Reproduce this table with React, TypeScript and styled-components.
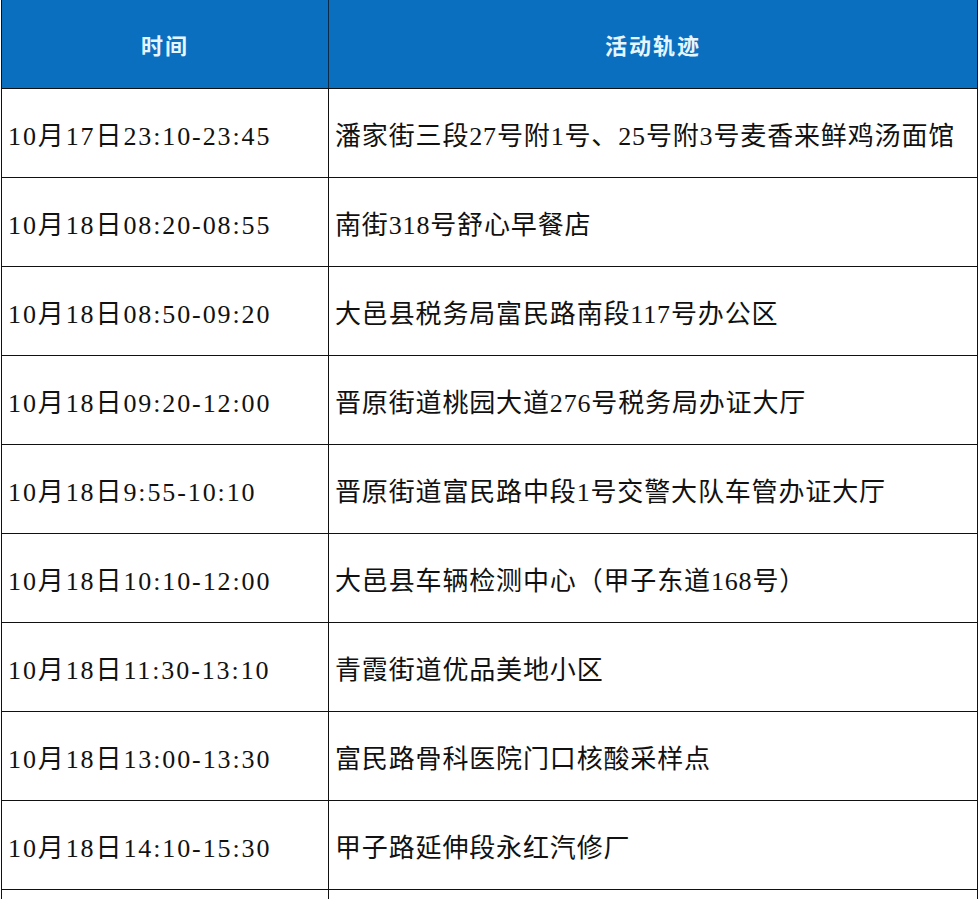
import React from "react";
import styled, { createGlobalStyle } from "styled-components";

const Global = createGlobalStyle`
  html, body { margin: 0; padding: 0; background: #ffffff; }
  body { overflow: hidden; }
`;

const Table = styled.div`
  margin-left: 1px;
  width: 977px;
  box-sizing: border-box;
  border-left: 1px solid #111;
  border-right: 1px solid #111;
`;

const Row = styled.div<{ $head?: boolean }>`
  display: grid;
  grid-template-columns: 327px 1fr;
  height: 89px;
  box-sizing: border-box;
  border-bottom: 1px solid #111;
  background: ${(p) => (p.$head ? "#0a6fbf" : "#ffffff")};
`;

const HeadCell = styled.div<{ $first?: boolean }>`
  display: flex;
  align-items: center;
  justify-content: center;
  box-sizing: border-box;
  border-right: ${(p) => (p.$first ? "1px solid #0b2a4a" : "none")};
  color: #e6f6ff;
  font-family: "Noto Sans CJK SC", sans-serif;
  font-weight: 700;
  font-size: 22px;
  letter-spacing: 2px;
  padding-bottom: 1px;
`;

const Cell = styled.div<{ $first?: boolean }>`
  display: flex;
  align-items: center;
  box-sizing: border-box;
  border-right: ${(p) => (p.$first ? "1px solid #111" : "none")};
  padding-left: 6px;
  padding-top: 1px;
  color: #111;
  font-family: "Liberation Serif", "Noto Sans CJK SC", serif;
  font-size: 26px;
  letter-spacing: ${(p) => (p.$first ? "1.9px" : "0.85px")};
  white-space: nowrap;
`;

const rows: [string, string][] = [
  ["10月17日23:10-23:45", "潘家街三段27号附1号、25号附3号麦香来鲜鸡汤面馆"],
  ["10月18日08:20-08:55", "南街318号舒心早餐店"],
  ["10月18日08:50-09:20", "大邑县税务局富民路南段117号办公区"],
  ["10月18日09:20-12:00", "晋原街道桃园大道276号税务局办证大厅"],
  ["10月18日9:55-10:10", "晋原街道富民路中段1号交警大队车管办证大厅"],
  ["10月18日10:10-12:00", "大邑县车辆检测中心（甲子东道168号）"],
  ["10月18日11:30-13:10", "青霞街道优品美地小区"],
  ["10月18日13:00-13:30", "富民路骨科医院门口核酸采样点"],
  ["10月18日14:10-15:30", "甲子路延伸段永红汽修厂"],
  ["", ""],
];

export default function App() {
  return (
    <>
      <Global />
      <Table>
        <Row $head>
          <HeadCell $first>时间</HeadCell>
          <HeadCell>活动轨迹</HeadCell>
        </Row>
        {rows.map(([t, a], i) => (
          <Row key={i}>
            <Cell $first>{t}</Cell>
            <Cell>{a}</Cell>
          </Row>
        ))}
      </Table>
    </>
  );
}
